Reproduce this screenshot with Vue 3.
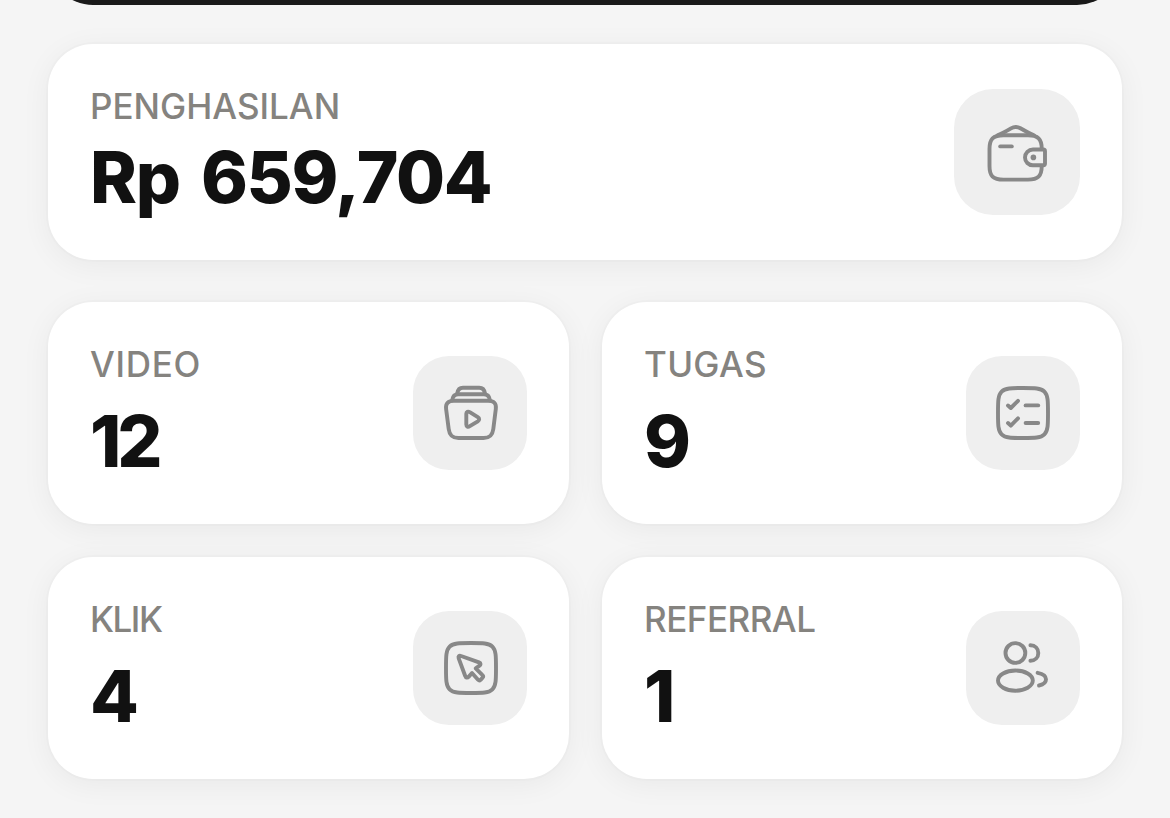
<template>
  <div class="dashboard">
    <div class="hero-bar"></div>

    <!-- Penghasilan -->
    <section class="card card-income">
      <div class="info">
        <p class="label label-income">PENGHASILAN</p>
        <p class="value value-income">Rp 659,704</p>
      </div>
      <div class="icon-box icon-large">
        <svg viewBox="0 0 126 126">
          <path d="M87.7 59.5C87.7 50 84 46.3 74 46.3H49.5C39 46.3 35.5 50 35.5 60V77C35.5 87 39 90.6 49.5 90.6H74C84 90.6 87.7 87 87.7 77.5" />
          <path d="M43.5 46.2C48.5 44.3 53 41.7 57 39.3C60.2 37.4 63.2 37.4 66.4 39.3C70.4 41.7 75 44.3 80 46.2" />
          <path d="M46.2 57.4H57.8" />
          <path d="M89.3 60.5H79C74.5 60.5 71 64 71 68.4S74.5 76.3 79 76.3H89.3Q91 76.3 91 74.6V62.2Q91 60.5 89.3 60.5Z" />
          <circle class="dot" cx="79.4" cy="68.4" r="2.8" />
        </svg>
      </div>
    </section>

    <!-- Statistik -->
    <div class="stats">
      <section v-for="item in stats" :key="item.id" class="card card-stat">
        <div class="info">
          <p class="label" :class="'label-' + item.id">{{ item.label }}</p>
          <p class="value" :class="'value-' + item.id">{{ item.value }}</p>
        </div>
        <div class="icon-box">
          <svg viewBox="0 0 114 114">
            <path v-for="d in item.paths" :key="d" :d="d" />
          </svg>
        </div>
      </section>
    </div>
  </div>
</template>

<script setup>
import { ref } from 'vue'

const stats = ref([
  {
    id: 'video',
    label: 'VIDEO',
    value: 12,
    paths: [
      'M41 44.7H75C81 44.7 83.5 47.5 82.8 53L80.3 73C79.5 79.5 76.5 82 70.5 82H45.5C39.5 82 36.5 79.5 35.7 73L33.1 53C32.4 47.5 35 44.7 41 44.7Z',
      'M39.2 44C39.8 40 41.7 38.3 45.4 38.3H70.7C74.4 38.3 76.3 40 76.9 44',
      'M44.2 37.5C44.8 33.4 46.5 31.7 50 31.7H66.2C69.7 31.7 71.4 33.4 72 37.5',
      'M53.3 57.8V68.6C53.3 70.7 55 71.3 56.8 70.2L64.8 65.3C66.6 64.1 66.6 62.3 64.8 61.2L56.8 56.2C55 55 53.3 55.7 53.3 57.8Z'
    ]
  },
  {
    id: 'tugas',
    label: 'TUGAS',
    value: 9,
    paths: [
      'M32 57C32 45.2 32 39.2 35.6 35.6C39.2 32 45.2 32 57 32C68.8 32 74.8 32 78.4 35.6C82 39.2 82 45.2 82 57C82 68.8 82 74.8 78.4 78.4C74.8 82 68.8 82 57 82C45.2 82 39.2 82 35.6 78.4C32 74.8 32 68.8 32 57Z',
      'M42 49.5L44.8 52L52 44.8',
      'M42 67L44.8 69.6L52 62.3',
      'M59.6 49.4H72.2',
      'M59.6 67H72.2'
    ]
  },
  {
    id: 'klik',
    label: 'KLIK',
    value: 4,
    paths: [
      'M33 57C33 45.2 33 39.2 36.6 35.6C40.2 32 46.2 32 58 32C69.8 32 75.8 32 79.4 35.6C83 39.2 83 45.2 83 57C83 68.8 83 74.8 79.4 78.4C75.8 82 69.8 82 58 82C46.2 82 40.2 82 36.6 78.4C33 74.8 33 68.8 33 57Z',
      'M48.1 45L66 51.4C68 52.2 68 53.6 66.2 54.9L62.7 57.4L69.5 64.1Q70.9 65.4 69.6 66.7L67.6 68.8Q66.3 70 65 68.7L59 62L55.8 65.6C54.4 67.2 52.8 67 52.2 65L45.7 47.4C45 45.3 46.1 44.2 48.1 45Z'
    ]
  },
  {
    id: 'referral',
    label: 'REFERRAL',
    value: 1,
    paths: [
      'M39.5 42A9.9 9.9 0 1 0 59.3 42A9.9 9.9 0 1 0 39.5 42Z',
      'M64.4 34.3C69.3 34.3 72.3 37.7 72.3 42S69.3 49.7 64.4 49.7',
      'M32 69.6A17.4 10.1 0 1 0 66.8 69.6A17.4 10.1 0 1 0 32 69.6Z',
      'M71.6 61.8C76.5 62.8 80 65.3 80 68.3C80 71.1 77.3 73.6 73 74.5'
    ]
  }
])
</script>

<style>
body {
  margin: 0;
  background: #f5f5f5;
}
</style>

<style scoped>
* {
  box-sizing: border-box;
}

.dashboard {
  height: 818px;
  padding: 0 48px;
  overflow: hidden;
  background: #f5f5f5;
  font-family: Inter, 'Liberation Sans', sans-serif;
}

.hero-bar {
  height: 90px;
  margin-top: -85px;
  border-radius: 45px;
  background: #1a1a1a;
}

.card {
  display: flex;
  align-items: center;
  justify-content: space-between;
  padding: 0 42px;
  background: #fff;
  border-radius: 45px;
  box-shadow: 0 0 0 2px rgba(0, 0, 0, 0.012), 0 5px 30px rgba(0, 0, 0, 0.055);
}

.card-income {
  height: 216px;
  margin-top: 39px;
}

.stats {
  display: grid;
  grid-template-columns: 521px 520px;
  gap: 33px;
  margin-top: 42px;
}

.card-stat {
  height: 222px;
}

.info {
  display: flex;
  flex-direction: column;
  align-self: flex-start;
  padding-top: 37px;
  white-space: nowrap;
}

.label {
  margin: 0;
  font-size: 35px;
  line-height: 50px;
  font-weight: 480;
  color: #85837f;
}

.label-video {
  letter-spacing: 0.7px;
}

.label-tugas {
  letter-spacing: 0.3px;
}

.label-klik {
  letter-spacing: -1.5px;
}

.label-referral {
  letter-spacing: -0.5px;
}

.value {
  margin: 14px 0 0;
  font-size: 71px;
  line-height: 76px;
  font-weight: 800;
  color: #111;
}

.value-income {
  margin-top: 8px;
  letter-spacing: -1.3px;
  word-spacing: 7px;
}

.value-video {
  letter-spacing: -4px;
}

/* Ikon */
.icon-box {
  flex-shrink: 0;
  width: 114px;
  height: 114px;
  border-radius: 36px;
  background: #efefef;
}

.icon-large {
  width: 126px;
  height: 126px;
  border-radius: 39px;
}

.icon-box svg {
  display: block;
  width: 100%;
  height: 100%;
  fill: none;
  stroke: #888;
  stroke-width: 3.9;
  stroke-linecap: round;
  stroke-linejoin: round;
}

.icon-box .dot {
  fill: #888;
  stroke: none;
}
</style>
